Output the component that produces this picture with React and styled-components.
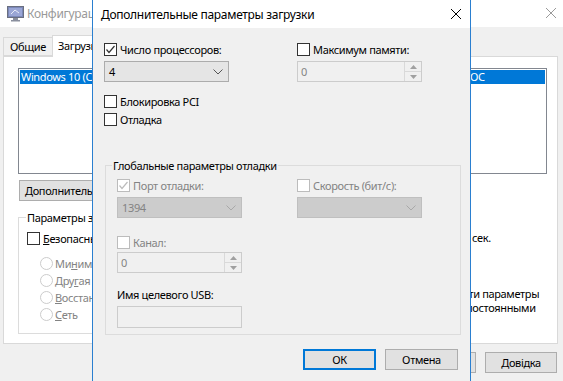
import styled, { createGlobalStyle } from "styled-components";

const Global = createGlobalStyle`
  html, body { margin: 0; padding: 0; }
  body {
    width: 563px;
    height: 381px;
    overflow: hidden;
    background: #f0f0f0;
    font-family: "Noto Sans", "Open Sans", sans-serif;
    font-size: 11px;
    letter-spacing: -0.35px;
    color: #000;
  }
`;

function CheckMark({ color }) {
  return (
    <svg width="11" height="11" viewBox="0 0 11 11">
      <polyline points="1.5,5.5 4,8.5 9.5,2" fill="none" stroke={color} strokeWidth="1.2" />
    </svg>
  );
}

function Chevron({ color }) {
  return (
    <svg width="10" height="6" viewBox="0 0 10 6">
      <polyline points="0.5,0.5 5,5 9.5,0.5" fill="none" stroke={color} strokeWidth="1" />
    </svg>
  );
}

function Cross({ color }) {
  return (
    <svg width="10" height="10" viewBox="0 0 10 10">
      <path d="M0 0 L10 10 M10 0 L0 10" stroke={color} strokeWidth="1" />
    </svg>
  );
}

function AppIcon() {
  return (
    <svg width="18" height="16" viewBox="0 0 18 16">
      <rect x="0.5" y="0.5" width="16" height="11" fill="#7b88b8" stroke="#6a6f80" />
      <rect x="2" y="2" width="13" height="8" fill="#9aa6d6" />
      <path d="M4 8 L8 4 L12 7" fill="none" stroke="#e8ecf8" strokeWidth="1" />
      <rect x="6" y="12" width="5" height="2" fill="#8a8f9e" />
      <rect x="4" y="14" width="9" height="1.5" fill="#8a8f9e" />
    </svg>
  );
}

function Check({ checked, disabled, label, u }) {
  return (
    <CheckRow $disabled={disabled}>
      <Box $disabled={disabled}>{checked && <CheckMark color={disabled ? "#bcbcbc" : "#333"} />}</Box>
      <span>
        {u ? <><U>{label[0]}</U>{label.slice(1)}</> : label}
      </span>
    </CheckRow>
  );
}

function Radio({ label, ui }) {
  return (
    <RadioRow>
      <Circle />
      <span>
        {label.slice(0, ui)}
        <U>{label[ui]}</U>
        {label.slice(ui + 1)}
      </span>
    </RadioRow>
  );
}

function Combo({ value, disabled }) {
  return (
    <ComboBox $disabled={disabled}>
      <span>{value}</span>
      <Chevron color={disabled ? "#a8a8a8" : "#555"} />
    </ComboBox>
  );
}

function Spin({ value }) {
  return (
    <SpinBox>
      <SpinText>{value}</SpinText>
      <SpinArrows>
        <SpinBtn>
          <svg width="7" height="4" viewBox="0 0 7 4"><polygon points="0,4 3.5,0 7,4" fill="#a0a0a0" /></svg>
        </SpinBtn>
        <SpinBtn>
          <svg width="7" height="4" viewBox="0 0 7 4"><polygon points="0,0 3.5,4 7,0" fill="#a0a0a0" /></svg>
        </SpinBtn>
      </SpinArrows>
    </SpinBox>
  );
}

export default function App() {
  return (
    <>
      <Global />
      <Win>
        <TitleBar>
          <AppIcon />
          <WinTitle>Конфигурация системы</WinTitle>
          <TitleClose><Cross color="#9a9a9a" /></TitleClose>
        </TitleBar>
        <Tabs>
          <Tab>Общие</Tab>
          <Tab $active>Загрузка</Tab>
          <Tab>Службы</Tab>
          <Tab>Автозагрузка</Tab>
          <Tab>Сервис</Tab>
        </Tabs>
        <Panel>
          <ListBox>
            <ListRow>Windows 10 (C:\WINDOWS) : Текущая ОС; ОС по умолчанию; Безопасный режим загрузки ОС</ListRow>
          </ListBox>
          <PanelButtons>
            <Button $w={160}>Дополнительные параметры...</Button>
            <Button $w={160}>Использовать по умолчанию</Button>
            <Button $w={75}>Удалить</Button>
          </PanelButtons>
          <LowerRow>
            <BootGroup>
              <legend>Параметры загрузки</legend>
              <Check label="Безопасный режим" u />
              <RadioList>
                <Radio label="Минимальная" ui={2} />
                <Radio label="Другая оболочка" ui={3} />
                <Radio label="Восстановление Active Directory" ui={0} />
                <Radio label="Сеть" ui={0} />
              </RadioList>
            </BootGroup>
            <RightCol>
              <span>Таймаут:</span>
              <TimeoutRow>
                <TimeoutInput>30</TimeoutInput>
                <span>сек.</span>
              </TimeoutRow>
              <Persist>
                <Box />
                <PersistLabel>Сделать эти параметры загрузки постоянными</PersistLabel>
              </Persist>
            </RightCol>
          </LowerRow>
        </Panel>
        <BottomButtons>
          <Button $w={72}>ОК</Button>
          <Button $w={72}>Отмена</Button>
          <Button $w={72}>Применить</Button>
          <Button $w={72}>Довідка</Button>
        </BottomButtons>
      </Win>

      <Dialog>
        <DlgTitle>
          <span>Дополнительные параметры загрузки</span>
          <Cross color="#000" />
        </DlgTitle>
        <DlgBody>
          <TopGrid>
            <Col>
              <Check checked label="Число процессоров:" />
              <Field><Combo value="4" /></Field>
              <Gap $h={13} />
              <Check label="Блокировка PCI" />
              <Gap $h={5} />
              <Check label="Отладка" />
            </Col>
            <Col>
              <Check label="Максимум памяти:" />
              <Field><Spin value="0" /></Field>
            </Col>
          </TopGrid>
          <DebugGroup>
            <legend>Глобальные параметры отладки</legend>
            <GroupGrid>
              <Col>
                <Check checked disabled label="Порт отладки:" />
                <Field><Combo value="1394" disabled /></Field>
              </Col>
              <Col>
                <Check disabled label="Скорость (бит/с):" />
                <Field><Combo value="" disabled /></Field>
              </Col>
            </GroupGrid>
            <Gap $h={18} />
            <Check disabled label="Канал:" />
            <FieldTight><Spin value="0" /></FieldTight>
            <UsbLabel>Имя целевого USB:</UsbLabel>
            <TextInput />
          </DebugGroup>
          <DlgButtons>
            <Button $w={73} $default>ОК</Button>
            <Button $w={73}>Отмена</Button>
          </DlgButtons>
        </DlgBody>
      </Dialog>
    </>
  );
}

const Win = styled.div`
  width: 563px;
  height: 381px;
  display: flex;
  flex-direction: column;
`;

const TitleBar = styled.div`
  height: 27px;
  background: #fff;
  display: flex;
  align-items: center;
  padding-left: 7px;
  gap: 2px;
`;

const WinTitle = styled.div`
  color: #999;
  flex: 1;
  font-size: 12px;
  letter-spacing: -0.3px;
`;

const TitleClose = styled.div`
  width: 10px;
  height: 10px;
  margin-right: 7px;
  margin-top: -1px;
  display: flex;
`;

const Tabs = styled.div`
  height: 29px;
  display: flex;
  align-items: flex-end;
  padding-left: 4px;
`;

const Tab = styled.div`
  height: ${p => (p.$active ? "22px" : "19px")};
  padding: 0 ${p => (p.$active ? "5px" : "6px")};
  box-sizing: border-box;
  background: ${p => (p.$active ? "#fff" : "#f0f0f0")};
  border: 1px solid #d9d9d9;
  border-bottom: ${p => (p.$active ? "none" : "1px solid #d9d9d9")};
  margin-bottom: ${p => (p.$active ? "-1px" : "0")};
  position: relative;
  margin-left: -1px;
  display: flex;
  align-items: ${p => (p.$active ? "flex-start" : "center")};
  padding-top: ${p => (p.$active ? "2px" : "0")};
`;

const Panel = styled.div`
  margin-left: 3px;
  width: 555px;
  height: 288px;
  box-sizing: border-box;
  background: #fff;
  border: 1px solid #d9d9d9;
  padding: 11px 10px 0 14px;
  display: flex;
  flex-direction: column;
`;

const ListBox = styled.div`
  height: 106px;
  box-sizing: border-box;
  border: 1px solid #828790;
  padding: 1px;
`;

const ListRow = styled.div`
  height: 14px;
  line-height: 14px;
  background: #0078d7;
  color: #fff;
  padding-left: 1px;
  white-space: nowrap;
  overflow: hidden;
`;

const PanelButtons = styled.div`
  display: flex;
  gap: 8px;
  margin: 6px 0 0 1px;
`;

const Button = styled.div`
  width: ${p => p.$w}px;
  height: 21px;
  box-sizing: border-box;
  background: #e1e1e1;
  border: ${p => (p.$default ? "2px solid #0078d7" : "1px solid #adadad")};
  display: flex;
  align-items: center;
  justify-content: ${p => (p.$w > 100 ? "flex-start" : "center")};
  padding-left: ${p => (p.$w > 100 ? "5px" : "0")};
  white-space: nowrap;
`;

const LowerRow = styled.div`
  display: flex;
  margin-top: 9px;
`;

const BootGroup = styled.fieldset`
  margin: 0;
  flex: none;
  width: 340px;
  height: 124px;
  box-sizing: border-box;
  border: 1px solid #dcdcdc;
  padding: 7px 8px 0 8px;
  display: flex;
  flex-direction: column;

  legend {
    padding: 0 1px;
    margin-left: -1px;
    line-height: 15px;
  }
`;

const U = styled.span`
  text-decoration: underline;
`;

const CheckRow = styled.div`
  display: flex;
  align-items: center;
  gap: 3px;
  height: 13px;
  line-height: 13px;
  color: ${p => (p.$disabled ? "#838383" : "#000")};
  white-space: nowrap;
`;

const Box = styled.div`
  width: 13px;
  height: 13px;
  box-sizing: border-box;
  flex: none;
  background: #fff;
  border: 1px solid ${p => (p.$disabled ? "#bcbcbc" : "#333")};
  display: flex;
  align-items: center;
  justify-content: center;
`;

const RadioList = styled.div`
  display: flex;
  flex-direction: column;
  gap: 4px;
  margin: 12px 0 0 13px;
`;

const RadioRow = styled.div`
  display: flex;
  align-items: center;
  gap: 2px;
  height: 13px;
  color: #838383;
  white-space: nowrap;
`;

const Circle = styled.div`
  width: 13px;
  height: 13px;
  box-sizing: border-box;
  border-radius: 50%;
  border: 1px solid #cccccc;
  background: #fff;
`;

const RightCol = styled.div`
  margin-left: 38px;
  width: 157px;
  flex: none;
  display: flex;
  flex-direction: column;
  padding-top: 1px;
`;

const TimeoutRow = styled.div`
  display: flex;
  align-items: center;
  gap: 6px;
  margin-top: 1px;
`;

const TimeoutInput = styled.div`
  width: 70px;
  flex: none;
  height: 21px;
  box-sizing: border-box;
  border: 1px solid #7a7a7a;
  padding-left: 3px;
  line-height: 19px;
`;

const Persist = styled.div`
  display: flex;
  gap: 3px;
  margin: 40px 0 0 8px;
`;

const PersistLabel = styled.div`
  width: 128px;
  flex: none;
  line-height: 14px;
  margin-top: -1px;
`;

const BottomButtons = styled.div`
  display: flex;
  justify-content: flex-end;
  gap: 9px;
  padding: 8px 6px 0 0;
`;

const Dialog = styled.div`
  position: absolute;
  left: 92px;
  top: -1px;
  width: 379px;
  height: 400px;
  box-sizing: border-box;
  border: 1px solid #2a7fd0;
  background: #f0f0f0;
  display: flex;
  flex-direction: column;
`;

const DlgTitle = styled.div`
  height: 28px;
  background: #fff;
  display: flex;
  align-items: center;
  justify-content: space-between;
  padding: 0 9px 0 8px;
  flex: none;
  font-size: 12px;
  letter-spacing: -0.3px;
`;

const DlgBody = styled.div`
  padding: 15px 0 0 11px;
  display: flex;
  flex-direction: column;
`;

const TopGrid = styled.div`
  display: grid;
  grid-template-columns: 193px 193px;
`;

const Col = styled.div`
  display: flex;
  flex-direction: column;
`;

const Gap = styled.div`
  height: ${p => p.$h}px;
`;

const Field = styled.div`
  margin-top: 5px;
`;

const FieldTight = styled.div`
  margin-top: 3px;
`;

const ComboBox = styled.div`
  width: 125px;
  height: 21px;
  box-sizing: border-box;
  background: ${p => (p.$disabled ? "#cccccc" : "#e5e5e5")};
  border: 1px solid ${p => (p.$disabled ? "#bfbfbf" : "#acacac")};
  color: ${p => (p.$disabled ? "#838383" : "#000")};
  display: flex;
  align-items: center;
  justify-content: space-between;
  padding: 0 5px 0 4px;
`;

const SpinBox = styled.div`
  width: 125px;
  height: 21px;
  box-sizing: border-box;
  border: 1px solid #cccccc;
  background: #f0f0f0;
  display: flex;
`;

const SpinText = styled.div`
  flex: 1;
  color: #838383;
  padding-left: 3px;
  line-height: 19px;
`;

const SpinArrows = styled.div`
  width: 16px;
  border-left: 1px solid #d9d9d9;
  display: flex;
  flex-direction: column;
`;

const SpinBtn = styled.div`
  flex: 1;
  display: flex;
  align-items: center;
  justify-content: center;
  & + & { border-top: 1px solid #d9d9d9; }
`;

const DebugGroup = styled.fieldset`
  margin: 32px 0 0 1px;
  width: 356px;
  height: 177px;
  box-sizing: border-box;
  border: 1px solid #dcdcdc;
  padding: 6px 0 0 11px;
  display: flex;
  flex-direction: column;

  legend {
    padding: 0 1px;
    margin-left: -5px;
    line-height: 15px;
  }
`;

const GroupGrid = styled.div`
  display: grid;
  grid-template-columns: 180px 125px;
`;

const UsbLabel = styled.div`
  margin-top: 15px;
  line-height: 14px;
`;

const TextInput = styled.div`
  margin-top: 4px;
  width: 125px;
  height: 22px;
  box-sizing: border-box;
  border: 1px solid #cccccc;
  background: #f0f0f0;
`;

const DlgButtons = styled.div`
  display: flex;
  justify-content: flex-end;
  gap: 9px;
  margin: 14px 12px 0 0;
`;
